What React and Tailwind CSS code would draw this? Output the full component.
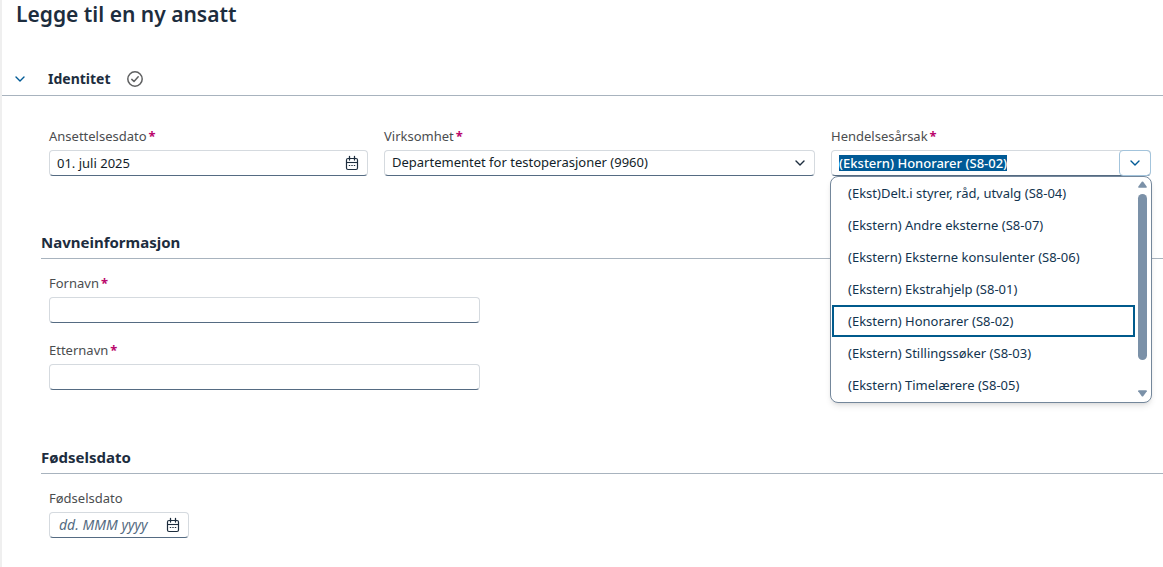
import { useEffect, useRef, useState } from "react";

const reasons = [
  "(Ekst)Delt.i styrer, råd, utvalg (S8-04)",
  "(Ekstern) Andre eksterne (S8-07)",
  "(Ekstern) Eksterne konsulenter (S8-06)",
  "(Ekstern) Ekstrahjelp (S8-01)",
  "(Ekstern) Honorarer (S8-02)",
  "(Ekstern) Stillingssøker (S8-03)",
  "(Ekstern) Timelærere (S8-05)",
];

const box =
  "flex h-[26px] items-center rounded-[4px] border border-[#d5dadf] border-b-[#556b82] bg-white";

function ChevronDown({ className }) {
  return (
    <svg viewBox="0 0 10 6" fill="none" className={className} aria-hidden="true">
      <path
        d="M1 1l4 4 4-4"
        stroke="currentColor"
        strokeWidth="1.4"
        strokeLinecap="round"
        strokeLinejoin="round"
      />
    </svg>
  );
}

function CalendarIcon() {
  return (
    <svg viewBox="0 0 14 16" fill="none" className="h-4 w-3.5" aria-hidden="true">
      <rect x="1.5" y="3.5" width="11" height="11" rx="1.5" stroke="currentColor" strokeWidth="1.2" />
      <path d="M1.5 7.5h11" stroke="currentColor" strokeWidth="1.1" />
      <path d="M4.5 1.5v3.5M9.5 1.5v3.5" stroke="currentColor" strokeWidth="1.3" strokeLinecap="round" />
      <path d="M3.8 10.5h1.4M6.3 10.5h1.4M8.8 10.5h1.4" stroke="currentColor" strokeWidth="1.1" />
    </svg>
  );
}

function CheckCircle() {
  return (
    <svg viewBox="0 0 16 16" fill="none" className="size-4 text-[#5f6061]" aria-hidden="true">
      <circle cx="8" cy="8" r="7.2" stroke="currentColor" strokeWidth="1.5" />
      <path
        d="M4.8 8.4l2.2 2.1 4.2-4.7"
        stroke="currentColor"
        strokeWidth="1.5"
        strokeLinecap="round"
        strokeLinejoin="round"
      />
    </svg>
  );
}

function Field({ id, label, required, className, children }) {
  return (
    <div className={className}>
      <label htmlFor={id} className="mb-0.5 flex h-[22px] items-center text-[13px] text-[#4b4d4f]">
        {label}
        {required && <span className="ml-0.5 text-[13px] font-bold text-[#ba066c]">*</span>}
      </label>
      {children}
    </div>
  );
}

function DateInput({ id, ...props }) {
  return (
    <div className={box}>
      <input
        id={id}
        type="text"
        className="h-full min-w-0 flex-1 pl-[7px] text-[13px] text-[#131e29] outline-none placeholder:pl-0.5 placeholder:text-sm placeholder:text-[#556b82] placeholder:italic"
        {...props}
      />
      <button type="button" aria-label="Åpne kalender" className="mr-2 text-[#1d2d3e]">
        <CalendarIcon />
      </button>
    </div>
  );
}

function ReasonSelect() {
  const [value, setValue] = useState(reasons[4]);
  const [open, setOpen] = useState(true);
  const inputRef = useRef(null);

  useEffect(() => {
    inputRef.current.focus();
    inputRef.current.select();
  }, []);

  function handlePick(reason) {
    setValue(reason);
    setOpen(false);
  }

  return (
    <div className="relative">
      <div className={box}>
        <input
          id="reason"
          ref={inputRef}
          type="text"
          role="combobox"
          aria-expanded={open}
          aria-controls="reason-list"
          value={value}
          onChange={(e) => setValue(e.target.value)}
          className="ml-[7px] min-w-0 flex-1 text-[13px] leading-4 font-medium text-[#131e29] outline-none selection:bg-[#005a96] selection:text-white"
        />
        <button
          type="button"
          aria-label="Vis alternativer"
          onClick={() => setOpen(!open)}
          className="-mr-px flex h-[26px] w-8 items-center justify-center rounded-[4px] border border-[#a3c4dc] text-[#005a96]"
        >
          <ChevronDown className="h-1.5 w-2.5" />
        </button>
      </div>
      {open && (
        <div className="absolute top-full -right-px -left-px z-10 flex rounded-lg border border-[#74879b] bg-white pb-px shadow-md">
          <ul id="reason-list" role="listbox" className="flex-1 pl-px">
            {reasons.map((reason) => (
              <li
                key={reason}
                role="option"
                aria-selected={reason === value}
                onClick={() => handlePick(reason)}
                className={`flex h-8 items-center border-2 pt-0.5 pl-3.5 text-[13px] text-[#12344f] ${
                  reason === value ? "border-[#005a8c]" : "border-transparent"
                }`}
              >
                {reason}
              </li>
            ))}
          </ul>
          <div className="flex w-4 flex-col items-start py-1 pl-[3px]" aria-hidden="true">
            <svg viewBox="0 0 10 7" className="h-[7px] w-[9px] fill-[#7b91a8]">
              <path d="M4.2.5Q5 0 5.8.5L9.8 6Q10 7 9 7H1Q0 7 .2 6z" />
            </svg>
            <div className="mt-1.5 h-[166px] w-[9px] rounded-full bg-[#7b91a8]" />
            <svg viewBox="0 0 10 7" className="mt-auto h-[7px] w-[9px] fill-[#7b91a8]">
              <path d="M4.2 6.5Q5 7 5.8 6.5L9.8 1Q10 0 9 0H1Q0 0 .2 1z" />
            </svg>
          </div>
        </div>
      )}
    </div>
  );
}

function SubHeading({ children }) {
  return (
    <h3 className="ml-[39px] h-[27px] border-b border-[#a8b3be] text-[15px] leading-5 font-bold text-[#1d2d3e]">
      {children}
    </h3>
  );
}

export default function App() {
  return (
    <main className="min-h-screen border-l-2 border-[#efefef] bg-white font-['Noto_Sans','Liberation_Sans',sans-serif]">
      <h1 className="pl-3.5 text-[21px] leading-7 font-semibold text-[#1d2d3e]">
        Legge til en ny ansatt
      </h1>

      <form>
        <div className="mt-[34px] flex h-[34px] items-center border-b border-[#a8b3be] pl-[13px]">
          <button type="button" aria-label="Skjul Identitet" className="mr-[23px] text-[#005a96]">
            <ChevronDown className="h-1.5 w-2.5" />
          </button>
          <h2 className="mr-4 text-sm font-bold text-[#1d2d3e]">Identitet</h2>
          <CheckCircle />
        </div>

        <div className="mt-[30px] mr-3 ml-[47px] grid grid-cols-[319fr_431fr_320fr] gap-4">
          <Field id="hire-date" label="Ansettelsesdato" required>
            <DateInput id="hire-date" defaultValue="01. juli 2025" />
          </Field>
          <Field id="company" label="Virksomhet" required>
            <div className="grid items-center">
              <select
                id="company"
                className={`${box} col-start-1 row-start-1 w-full appearance-none pl-[7px] text-[13px] text-[#131e29]`}
              >
                <option>Departementet for testoperasjoner (9960)</option>
              </select>
              <ChevronDown className="pointer-events-none col-start-1 row-start-1 mr-2.5 h-1.5 w-2.5 justify-self-end text-[#1d2d3e]" />
            </div>
          </Field>
          <Field id="reason" label="Hendelsesårsak" required>
            <ReasonSelect />
          </Field>
        </div>

        <div className="mt-14">
          <SubHeading>Navneinformasjon</SubHeading>
          <div className="mt-3.5 ml-[47px] flex max-w-[431px] flex-col gap-[17px]">
            <Field id="first-name" label="Fornavn" required>
              <input id="first-name" type="text" className={`${box} w-full px-[7px] text-[13px]`} />
            </Field>
            <Field id="last-name" label="Etternavn" required>
              <input id="last-name" type="text" className={`${box} w-full px-[7px] text-[13px]`} />
            </Field>
          </div>
        </div>

        <div className="mt-[57px]">
          <SubHeading>Fødselsdato</SubHeading>
          <Field id="birth-date" label="Fødselsdato" className="mt-3.5 ml-[47px] w-[140px]">
            <DateInput id="birth-date" placeholder="dd. MMM yyyy" />
          </Field>
        </div>
      </form>
    </main>
  );
}
